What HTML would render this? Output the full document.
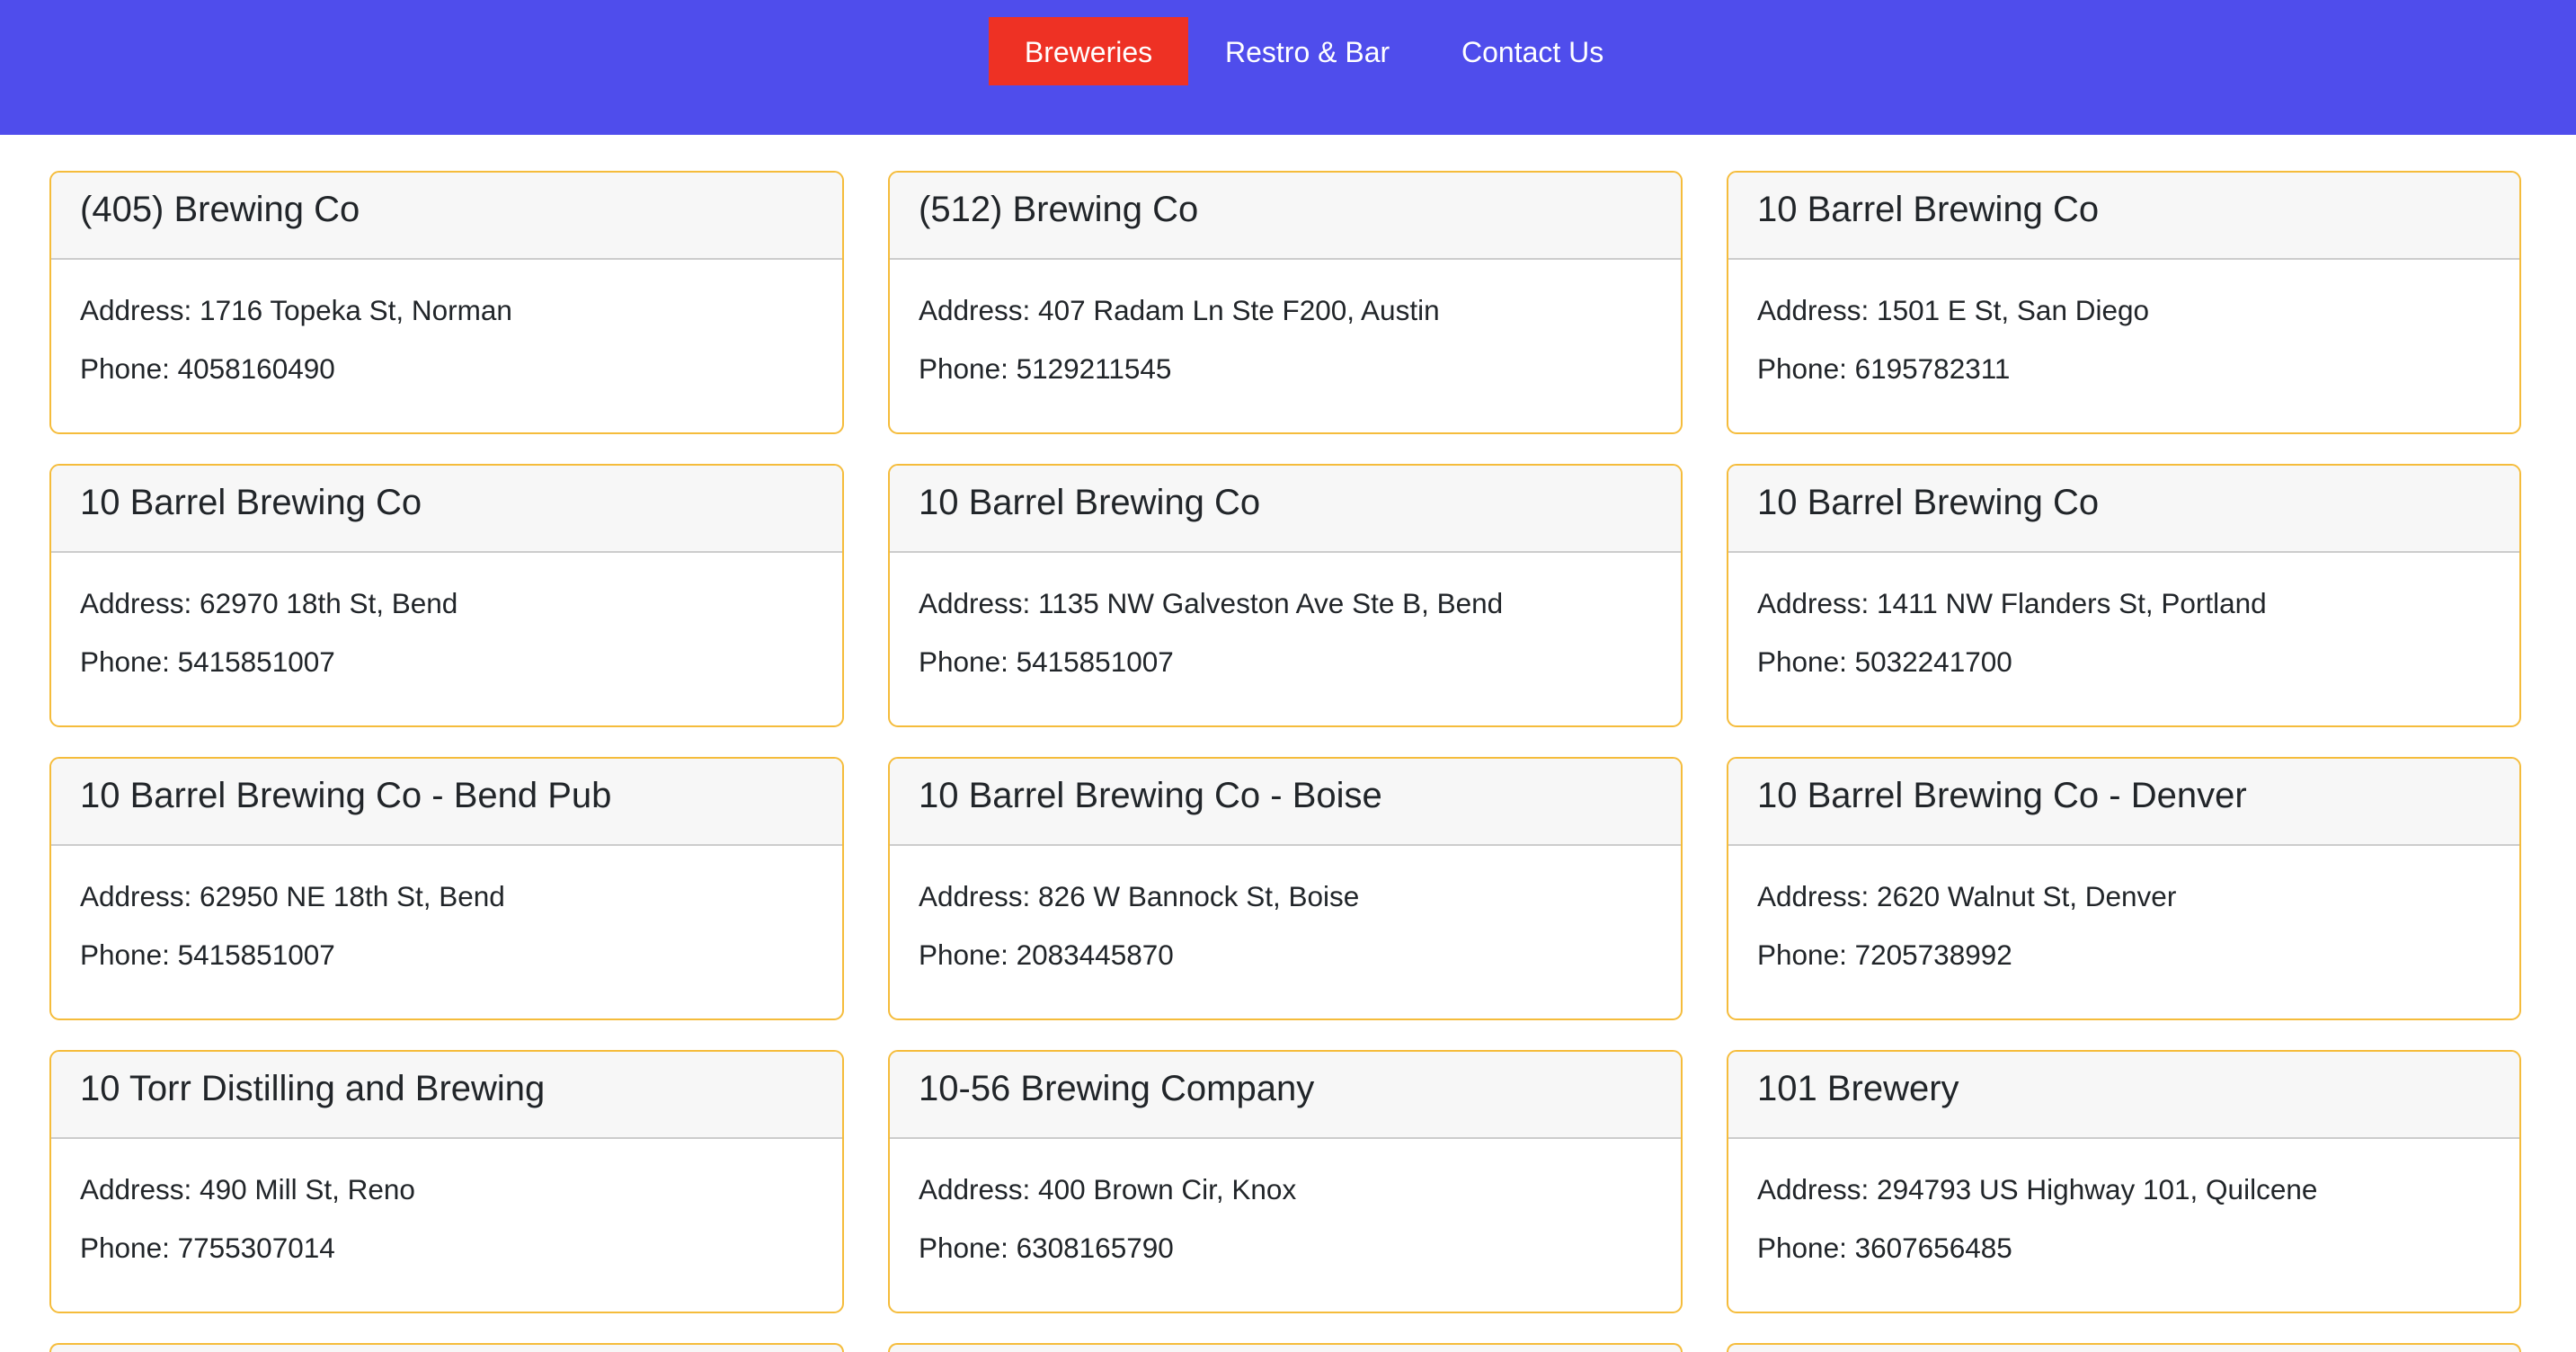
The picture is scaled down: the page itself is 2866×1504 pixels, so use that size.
<!DOCTYPE html>
<html><head><meta charset="utf-8">
<style>
*{box-sizing:border-box;margin:0;padding:0}
html,body{width:2866px;height:1504px;overflow:hidden}
body{position:relative;background:#fff;font-family:"Liberation Sans",Arial,sans-serif;color:#212529}
.wrap{position:absolute;left:0;top:0;width:2866px;height:1504px;overflow:hidden}
.nav{position:absolute;left:0;top:0;width:2866px;height:150px;background:#4f4dec}
.nav a{position:absolute;top:19px;height:76px;line-height:78px;font-size:32px;color:#fff;text-decoration:none;white-space:nowrap}
.nav a.act{background:#ee3124;left:1100px;width:222px;text-align:center}
.grid{position:absolute;left:55px;top:190px;display:grid;grid-template-columns:884px 884px 884px;column-gap:49px;row-gap:33px}
.card{height:293px;border:2px solid #f5bc3b;border-radius:11px;overflow:hidden}
.card.cut{height:10px;border-bottom:0;border-bottom-left-radius:0;border-bottom-right-radius:0;background:#f7f7f7}
.hd{height:97px;background:#f7f7f7;border-bottom:2px solid #cccccc;padding:0 0 0 32px;font-size:40px;line-height:40px;padding-top:21px;white-space:nowrap}
.bd{padding:39px 0 0 32px;font-size:31.5px;line-height:35px;white-space:nowrap}
.bd p+p{margin-top:30px}
</style></head><body><div class="wrap">
<div class="nav">
<a class="act">Breweries</a>
<a style="left:1363px">Restro &amp; Bar</a>
<a style="left:1626px">Contact Us</a>
</div>
<div class="grid">
<div class="card"><div class="hd">(405) Brewing Co</div><div class="bd"><p>Address: 1716 Topeka St, Norman</p><p>Phone: 4058160490</p></div></div>
<div class="card"><div class="hd">(512) Brewing Co</div><div class="bd"><p>Address: 407 Radam Ln Ste F200, Austin</p><p>Phone: 5129211545</p></div></div>
<div class="card"><div class="hd">10 Barrel Brewing Co</div><div class="bd"><p>Address: 1501 E St, San Diego</p><p>Phone: 6195782311</p></div></div>
<div class="card"><div class="hd">10 Barrel Brewing Co</div><div class="bd"><p>Address: 62970 18th St, Bend</p><p>Phone: 5415851007</p></div></div>
<div class="card"><div class="hd">10 Barrel Brewing Co</div><div class="bd"><p>Address: 1135 NW Galveston Ave Ste B, Bend</p><p>Phone: 5415851007</p></div></div>
<div class="card"><div class="hd">10 Barrel Brewing Co</div><div class="bd"><p>Address: 1411 NW Flanders St, Portland</p><p>Phone: 5032241700</p></div></div>
<div class="card"><div class="hd">10 Barrel Brewing Co - Bend Pub</div><div class="bd"><p>Address: 62950 NE 18th St, Bend</p><p>Phone: 5415851007</p></div></div>
<div class="card"><div class="hd">10 Barrel Brewing Co - Boise</div><div class="bd"><p>Address: 826 W Bannock St, Boise</p><p>Phone: 2083445870</p></div></div>
<div class="card"><div class="hd">10 Barrel Brewing Co - Denver</div><div class="bd"><p>Address: 2620 Walnut St, Denver</p><p>Phone: 7205738992</p></div></div>
<div class="card"><div class="hd">10 Torr Distilling and Brewing</div><div class="bd"><p>Address: 490 Mill St, Reno</p><p>Phone: 7755307014</p></div></div>
<div class="card"><div class="hd">10-56 Brewing Company</div><div class="bd"><p>Address: 400 Brown Cir, Knox</p><p>Phone: 6308165790</p></div></div>
<div class="card"><div class="hd">101 Brewery</div><div class="bd"><p>Address: 294793 US Highway 101, Quilcene</p><p>Phone: 3607656485</p></div></div>
<div class="card cut"></div>
<div class="card cut"></div>
<div class="card cut"></div>
</div>
</div></body></html>
